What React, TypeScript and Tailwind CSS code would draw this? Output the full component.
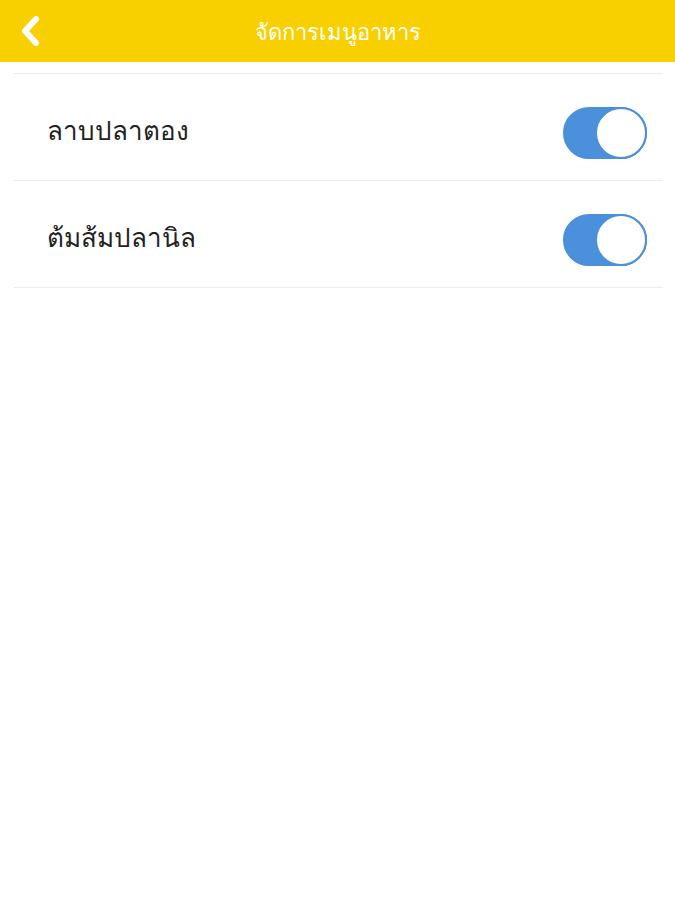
import React, { useState } from 'react';

const items = ['ลาบปลาตอง', 'ต้มส้มปลานิล'];

const Toggle: React.FC<{ on: boolean; onClick: () => void }> = ({ on, onClick }) => (
  <button
    onClick={onClick}
    className={`relative w-[84px] h-[52px] rounded-full border-2 ${on ? 'bg-[#4a90da] border-[#4a90da]' : 'bg-white border-[#e5e5e5]'}`}
  >
    <span
      className={`absolute top-[-2px] w-[52px] h-[52px] rounded-full bg-white border-[2.5px] border-[#4a90da] ${on ? 'right-[-2px]' : 'left-[-2px]'}`}
    />
  </button>
);

export default function App() {
  const [state, setState] = useState([true, true]);

  return (
    <div className="w-[675px] h-[900px] bg-white font-['Noto_Sans','DejaVu_Sans',sans-serif]">
      <header className="h-[62px] bg-[#f8d000] flex items-center relative">
        <button className="absolute left-[16px] top-[14px] w-[28px] h-[34px] flex items-center justify-center">
          <svg width="22" height="30" viewBox="0 0 22 30">
            <path d="M17 3 L6 15 L17 27" fill="none" stroke="white" strokeWidth="6" strokeLinecap="round" strokeLinejoin="round" />
          </svg>
        </button>
        <h1 className="flex-1 text-center text-white text-[22px] leading-none">จัดการเมนูอาหาร</h1>
      </header>
      <div className="mt-[11px] ml-[14px] mr-[12px] border-t border-[#ececec]">
        {items.map((name, i) => (
          <div key={name} className="h-[107px] border-b border-[#ececec] flex items-center justify-between pl-[33px] pr-[16px] pt-[12px]">
            <span className="text-[26px] font-light text-[#222] -mt-[6px]">{name}</span>
            <Toggle on={state[i]} onClick={() => setState(s => s.map((v, j) => (j === i ? !v : v)))} />
          </div>
        ))}
      </div>
    </div>
  );
}
